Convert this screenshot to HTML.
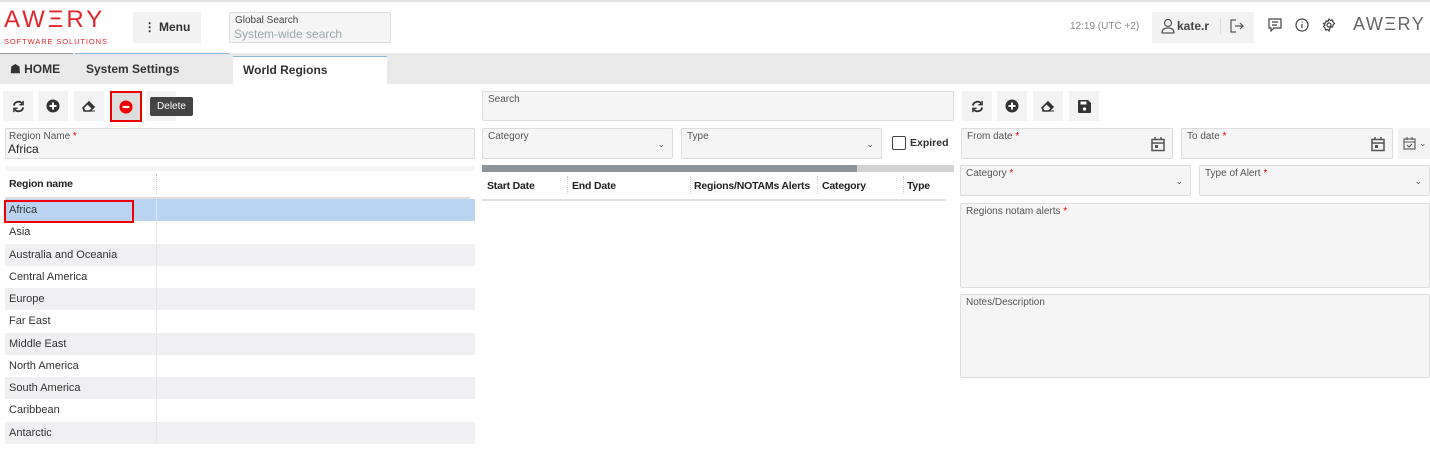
<!DOCTYPE html>
<html><head><style>
*{box-sizing:border-box;margin:0;padding:0}
body{width:1430px;height:451px;background:#fff;font-family:"Liberation Sans",sans-serif;position:relative;overflow:hidden;color:#333}
.a{position:absolute}
.fld{position:absolute;background:#f5f5f5;border:1px solid #ddd;border-radius:2px}
.lbl{position:absolute;left:5px;top:2px;font-size:10px;color:#555}
.req{color:#e00}
.btn{position:absolute;width:30px;height:30px;background:#f3f3f3;display:flex;align-items:center;justify-content:center}
.row{position:absolute;left:5px;width:470px;height:22px;font-size:11px;line-height:23px;padding-left:4px;color:#333}
.row.g{background:#f0f0f2}
.row:after{content:"";position:absolute;left:151px;top:0;bottom:0;border-left:1px solid #e6e6e6}
.th{position:absolute;font-size:10.5px;font-weight:bold;color:#222;top:180px;letter-spacing:-0.2px}
.chev{position:absolute;font-size:9px;color:#555}
</style></head><body>
<div class="a" style="left:0;top:0;width:1430px;height:2px;background:#e4e4e4"></div>
<div class="a" style="left:4px;top:6px;font-size:24px;letter-spacing:3px;color:#e3262d;font-weight:300">AWΞRY</div>
<div class="a" style="left:4px;top:37px;font-size:7.5px;letter-spacing:0.9px;color:#e3262d">SOFTWARE SOLUTIONS</div>
<div class="a" style="left:133px;top:12px;width:68px;height:31px;background:#f2f2f2;font-size:12px;font-weight:bold;line-height:31px;text-align:center;color:#333">⋮ Menu</div>
<div class="fld" style="left:229px;top:12px;width:162px;height:31px;background:#f5f5f5"><div class="a" style="left:5px;top:2px;font-size:10px;color:#444">Global Search</div><div class="a" style="left:4px;top:14px;font-size:12px;color:#9aa">System-wide search</div></div>
<div class="a" style="left:1070px;top:21px;font-size:10px;color:#888">12:19 (UTC +2)</div>
<div class="a" style="left:1152px;top:12px;width:102px;height:31px;background:#f2f2f2"></div>
<svg class="a" style="left:1161px;top:18px" width="14" height="16" viewBox="0 0 14 16" fill="none" stroke="#555" stroke-width="1.2"><circle cx="7" cy="5" r="3.5"/><path d="M1 15c0-4 3-5 6-5s6 1 6 5z"/></svg>
<div class="a" style="left:1177px;top:19px;font-size:12px;font-weight:bold;color:#444">kate.r</div>
<div class="a" style="left:1220px;top:18px;width:1px;height:16px;background:#ddd"></div>
<svg class="a" style="left:1230px;top:19px" width="14" height="14" viewBox="0 0 14 14" fill="none" stroke="#555" stroke-width="1.2"><path d="M6 1H1v12h5M5 7h8M10 4l3 3-3 3"/></svg>
<svg class="a" style="left:1268px;top:18px" width="14" height="14" viewBox="0 0 14 14" fill="none" stroke="#444" stroke-width="1.2"><path d="M1 1h12v9H6l-3 3v-3H1z M4 4h6M4 7h5"/></svg>
<svg class="a" style="left:1295px;top:18px" width="14" height="14" viewBox="0 0 14 14" fill="none" stroke="#444" stroke-width="1.2"><circle cx="7" cy="7" r="6"/><path d="M7 6v4M7 3.5v1"/></svg>
<svg class="a" style="left:1322px;top:18px" width="14" height="14" viewBox="0 0 14 14" fill="none" stroke="#444" stroke-width="1.2"><circle cx="7" cy="7" r="2"/><path d="M7 1l1.5 1.5 2-.5.5 2 1.5 1.5-1.5 1.5-.5 2-2-.5L7 13l-1.5-1.5-2 .5-.5-2L1.5 8.5 3 7l-1.5-1.5 2-.5.5-2 2 .5z"/></svg>
<div class="a" style="left:1353px;top:14px;font-size:18px;letter-spacing:1.5px;color:#666;font-weight:300">AWΞRY</div>
<div class="a" style="left:0;top:53px;width:1430px;height:31px;background:#e9e9e9"></div>
<div class="a" style="left:0;top:53px;width:73px;height:31px;border-top:1px solid #999;font-size:12px;font-weight:bold;line-height:31px;padding-left:10px;color:#333">☗ HOME</div>
<div class="a" style="left:75px;top:53px;width:154px;height:31px;border-top:1px solid #8ab9d8;font-size:12px;font-weight:bold;line-height:31px;padding-left:11px;color:#333">System Settings</div>
<div class="a" style="left:233px;top:56px;width:154px;height:28px;background:#fff;border-top:1px solid #8ab9d8;font-size:12px;font-weight:bold;line-height:27px;padding-left:10px;color:#333">World Regions</div>
<div class="btn" style="left:3px;top:91px"><svg width="13" height="13" viewBox="0 0 14 14" fill="none" stroke="#333" stroke-width="2"><path d="M2 6a5 5 0 0 1 9-2M12 8a5 5 0 0 1-9 2"/><path d="M12 1v4H8M2 13V9h4" stroke-width="1.5"/></svg></div>
<div class="btn" style="left:38px;top:91px"><svg width="14" height="14" viewBox="0 0 14 14"><circle cx="7" cy="7" r="6.5" fill="#333"/><path d="M7 3.5v7M3.5 7h7" stroke="#fff" stroke-width="2"/></svg></div>
<div class="btn" style="left:74px;top:91px"><svg width="14" height="12" viewBox="0 0 14 12"><path d="M1 8l6-6 5 5-4 4H3z" fill="none" stroke="#333" stroke-width="1.6"/><path d="M7 2l5 5-2 2-5-5z" fill="#333"/><path d="M1 11h12" stroke="#333"/></svg></div>
<div class="btn" style="left:110px;top:91px;width:32px;height:31px;background:#ddd;border:2px solid #e00"><svg width="14" height="14" viewBox="0 0 14 14"><circle cx="7" cy="7" r="6.5" fill="#e00"/><path d="M3.5 7h7" stroke="#fff" stroke-width="2.2"/></svg></div>
<div class="a" style="left:146px;top:91px;width:30px;height:30px;background:#f3f3f3"></div>
<div class="a" style="left:150px;top:97px;width:43px;height:19px;background:#444;border-radius:2px;color:#fff;font-size:10px;line-height:19px;text-align:center">Delete</div>
<div class="fld" style="left:5px;top:128px;width:470px;height:31px"><div class="lbl" style="left:3px">Region Name <span class="req">*</span></div><div class="a" style="left:2px;top:13px;font-size:12px;color:#222">Africa</div></div>
<div class="a" style="left:5px;top:166px;width:470px;height:5px;background:#f5f5f5"></div>
<div class="th" style="left:9px;top:178px">Region name</div>
<div class="a" style="left:156px;top:174px;height:20px;border-left:1px dotted #ccc"></div>
<div class="a" style="left:5px;top:197px;width:465px;height:2px;background:#ddd"></div>
<div class="row" style="top:199px;background:#b9d3f1">Africa</div>
<div class="a" style="left:4px;top:200px;width:130px;height:23px;border:2px solid #e00"></div>
<div class="row" style="top:221px">Asia</div>
<div class="row g" style="top:244px">Australia and Oceania</div>
<div class="row" style="top:266px">Central America</div>
<div class="row g" style="top:288px">Europe</div>
<div class="row" style="top:310px">Far East</div>
<div class="row g" style="top:333px">Middle East</div>
<div class="row" style="top:355px">North America</div>
<div class="row g" style="top:377px">South America</div>
<div class="row" style="top:399px">Caribbean</div>
<div class="row g" style="top:422px">Antarctic</div>
<div class="fld" style="left:482px;top:91px;width:472px;height:30px"><div class="lbl">Search</div></div>
<div class="fld" style="left:482px;top:128px;width:191px;height:31px"><div class="lbl">Category</div><div class="chev" style="right:7px;top:10px">⌄</div></div>
<div class="fld" style="left:681px;top:128px;width:201px;height:31px"><div class="lbl">Type</div><div class="chev" style="right:7px;top:10px">⌄</div></div>
<div class="a" style="left:892px;top:136px;width:14px;height:14px;border:1px solid #444;border-radius:2px"></div>
<div class="a" style="left:910px;top:137px;font-size:10.5px;font-weight:bold;color:#333">Expired</div>
<div class="a" style="left:482px;top:165px;width:472px;height:7px;background:#d2d2d2"></div>
<div class="a" style="left:482px;top:165px;width:375px;height:7px;background:#8d969c"></div>
<div class="th" style="left:487px">Start Date</div>
<div class="th" style="left:572px">End Date</div>
<div class="th" style="left:694px">Regions/NOTAMs Alerts</div>
<div class="th" style="left:822px">Category</div>
<div class="th" style="left:907px">Type</div>
<div class="a" style="left:567px;top:176px;height:18px;border-left:1px dotted #ccc"></div>
<div class="a" style="left:690px;top:176px;height:18px;border-left:1px dotted #ccc"></div>
<div class="a" style="left:817px;top:176px;height:18px;border-left:1px dotted #ccc"></div>
<div class="a" style="left:903px;top:176px;height:18px;border-left:1px dotted #ccc"></div>
<div class="a" style="left:482px;top:199px;width:464px;height:2px;background:#e0e0e0"></div>
<div class="btn" style="left:962px;top:91px"><svg width="13" height="13" viewBox="0 0 14 14" fill="none" stroke="#333" stroke-width="2"><path d="M2 6a5 5 0 0 1 9-2M12 8a5 5 0 0 1-9 2"/><path d="M12 1v4H8M2 13V9h4" stroke-width="1.5"/></svg></div>
<div class="btn" style="left:997px;top:91px"><svg width="14" height="14" viewBox="0 0 14 14"><circle cx="7" cy="7" r="6.5" fill="#333"/><path d="M7 3.5v7M3.5 7h7" stroke="#fff" stroke-width="2"/></svg></div>
<div class="btn" style="left:1033px;top:91px"><svg width="14" height="12" viewBox="0 0 14 12"><path d="M1 8l6-6 5 5-4 4H3z" fill="none" stroke="#333" stroke-width="1.6"/><path d="M7 2l5 5-2 2-5-5z" fill="#333"/><path d="M1 11h12" stroke="#333"/></svg></div>
<div class="btn" style="left:1069px;top:91px"><svg width="13" height="13" viewBox="0 0 13 13"><path d="M0 1a1 1 0 0 1 1-1h9l3 3v9a1 1 0 0 1-1 1H1a1 1 0 0 1-1-1z" fill="#333"/><rect x="2.5" y="1.5" width="6" height="3" fill="#fff"/><circle cx="6.5" cy="9" r="1.6" fill="#fff"/></svg></div>
<div class="fld" style="left:961px;top:128px;width:212px;height:31px"><div class="lbl">From date <span class="req">*</span></div>
<svg class="a" style="right:7px;top:8px" width="14" height="15" viewBox="0 0 14 15" fill="none" stroke="#555" stroke-width="1.5"><rect x="1" y="2.5" width="12" height="11"/><path d="M1 6h12M4 0v3M10 0v3"/><rect x="4" y="8" width="3" height="3" fill="#555" stroke="none"/></svg></div>
<div class="fld" style="left:1181px;top:128px;width:212px;height:31px"><div class="lbl">To date <span class="req">*</span></div>
<svg class="a" style="right:7px;top:8px" width="14" height="15" viewBox="0 0 14 15" fill="none" stroke="#555" stroke-width="1.5"><rect x="1" y="2.5" width="12" height="11"/><path d="M1 6h12M4 0v3M10 0v3"/><rect x="4" y="8" width="3" height="3" fill="#555" stroke="none"/></svg></div>
<div class="a" style="left:1398px;top:128px;width:32px;height:31px;background:#f3f3f3"></div>
<svg class="a" style="left:1403px;top:137px" width="13" height="13" viewBox="0 0 13 13" fill="none" stroke="#555" stroke-width="1.1"><rect x="1" y="2" width="11" height="10"/><path d="M1 5h11M4 0v3M9 0v3M4 8l2 2 3-3"/></svg>
<div class="chev" style="left:1419px;top:138px">⌄</div>
<div class="fld" style="left:960px;top:165px;width:231px;height:31px"><div class="lbl">Category <span class="req">*</span></div><div class="chev" style="right:7px;top:10px">⌄</div></div>
<div class="fld" style="left:1199px;top:165px;width:231px;height:31px"><div class="lbl">Type of Alert <span class="req">*</span></div><div class="chev" style="right:7px;top:10px">⌄</div></div>
<div class="fld" style="left:960px;top:203px;width:470px;height:85px"><div class="lbl">Regions notam alerts <span class="req">*</span></div></div>
<div class="fld" style="left:960px;top:294px;width:470px;height:84px"><div class="lbl">Notes/Description</div></div>
</body></html>
